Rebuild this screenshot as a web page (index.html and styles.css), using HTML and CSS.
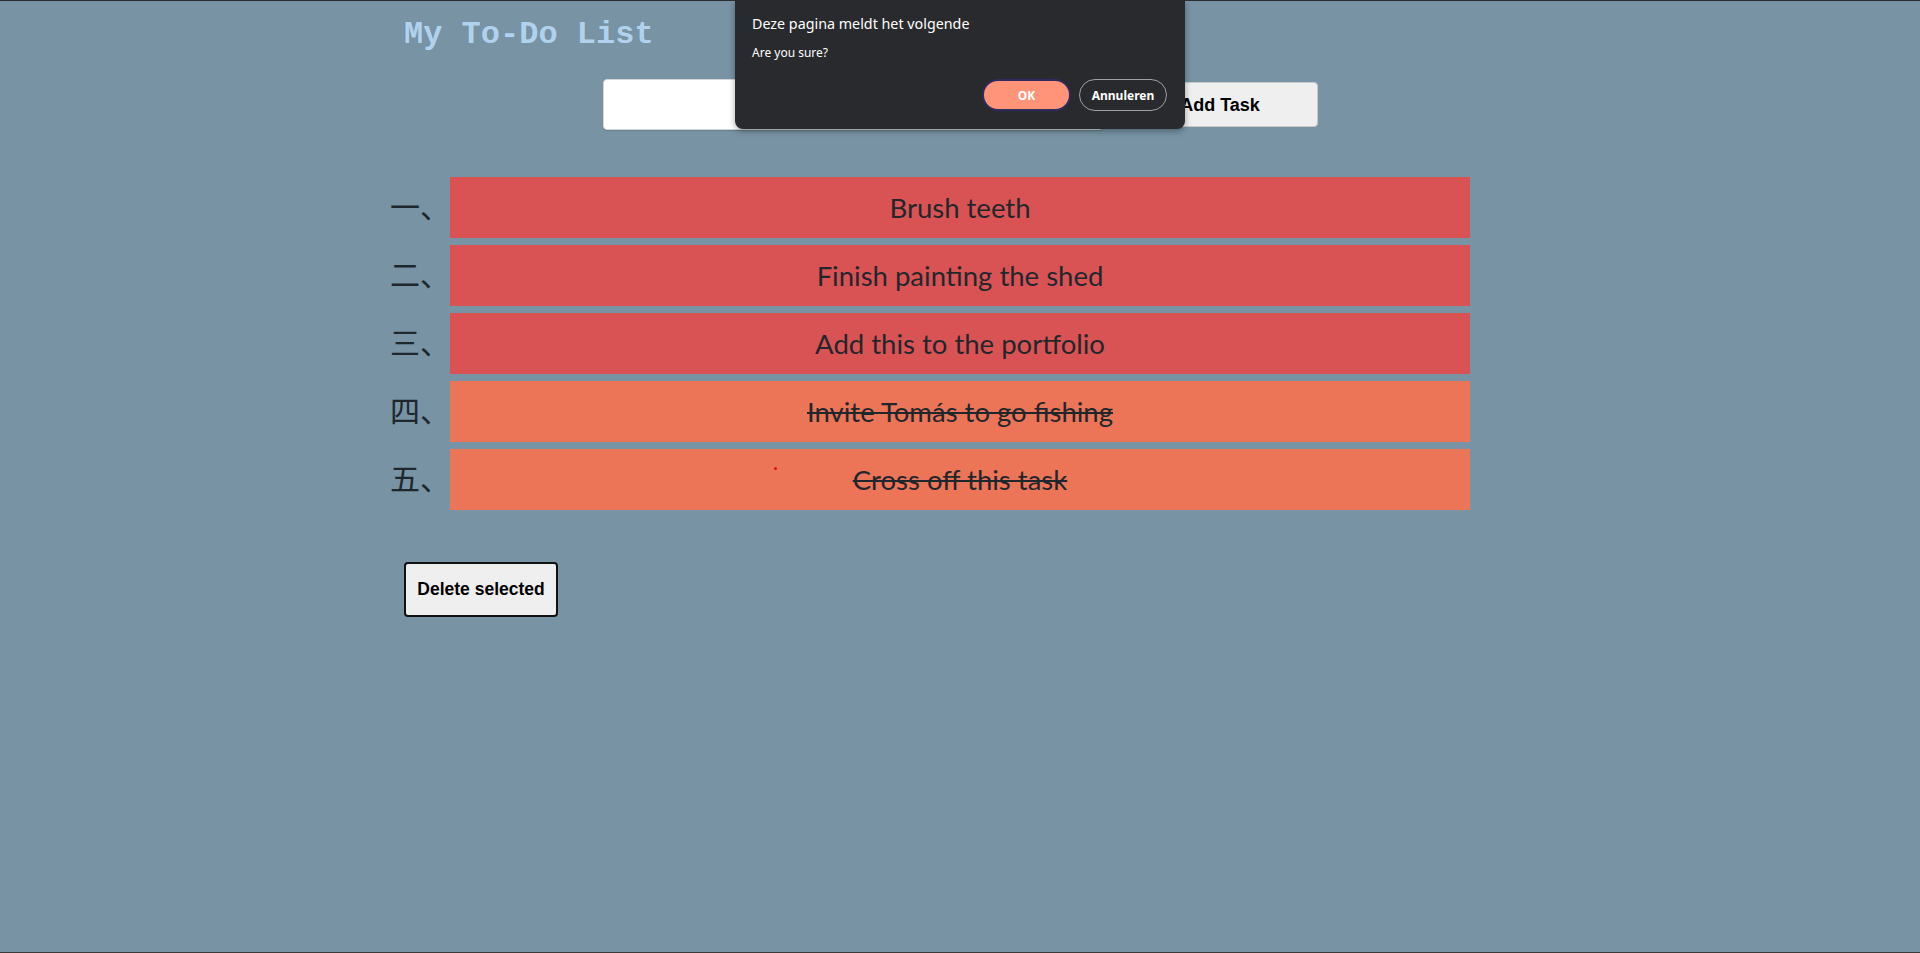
FILE: index.html
```html
<!DOCTYPE html>
<html lang="en">
<head>
<meta charset="utf-8">
<title>My To-Do List</title>
<link rel="stylesheet" href="styles.css">
</head>
<body>
<div class="page">
  <div class="container">
    <h1 class="title">My To-Do List</h1>
    <form class="add-form">
      <input class="task-input" type="text">
      <button class="add-btn" type="button">Add Task</button>
    </form>
    <ol class="tasks">
      <li class="task task-open">Brush teeth</li>
      <li class="task task-open">Finish painting the shed</li>
      <li class="task task-open">Add this to the portfolio</li>
      <li class="task task-done">Invite Tomás to go fishing</li>
      <li class="task task-done">Cross off this task</li>
    </ol>
    <div class="actions">
      <button class="delete-btn" type="button">Delete selected</button>
    </div>
  </div>

  <div class="dialog">
    <div class="dialog-title">Deze pagina meldt het volgende</div>
    <div class="dialog-msg">Are you sure?</div>
    <div class="dialog-buttons">
      <button class="dlg-btn dlg-ok" type="button">OK</button>
      <button class="dlg-btn dlg-cancel" type="button">Annuleren</button>
    </div>
  </div>
  <span class="cursor-dot"></span>
</div>
</body>
</html>
```

FILE: styles.css
```css
html, body {
  margin: 0;
  padding: 0;
}

body {
  background: #7793a4;
  font-family: "Liberation Sans", Arial, sans-serif;
}

.page {
  position: relative;
  height: 953px;
  box-sizing: border-box;
  border-top: 1px solid #2a2b2e;
  border-bottom: 1px solid #3a3a3a;
  overflow: hidden;
}

.container {
  width: 1112px;
  margin: 0 auto;
}

.title {
  margin: 16px 0 0;
  font-family: "Liberation Mono", "Courier New", monospace;
  font-weight: bold;
  font-size: 32px;
  line-height: 36px;
  color: #b0d2ee;
}

.add-form {
  margin: 26px 0 0;
  display: flex;
  justify-content: center;
  align-items: center;
  gap: 20px;
  height: 51px;
}

.task-input {
  width: 500px;
  height: 51px;
  box-sizing: border-box;
  border: 1px solid #d6d6d6;
  border-radius: 4px;
  background: #fff;
  box-shadow: 0 1px 1px rgba(0,0,0,0.15);
  padding: 0 10px;
  font-size: 18px;
}

.add-btn {
  width: 195px;
  height: 45px;
  box-sizing: border-box;
  padding: 2px 0 0;
  border: 1px solid #c9c9c9;
  border-radius: 4px;
  background: #efefef;
  font-family: "Liberation Sans", Arial, sans-serif;
  font-weight: bold;
  font-size: 18px;
  color: #000;
}

.tasks {
  margin: 47px 0 0;
  padding: 0 46px;
  list-style-type: cjk-ideographic;
  list-style-position: outside;
}

.task {
  height: 61px;
  box-sizing: border-box;
  padding-bottom: 4px;
  line-height: 57px;
  margin: 0 0 7px;
  text-align: center;
  font-family: Lato, "Noto Sans CJK SC", sans-serif;
  font-size: 27.5px;
  color: #1f272d;
}

.task::marker {
  font-family: "Noto Sans CJK SC", sans-serif;
  font-size: 30px;
  color: #1f272d;
}

.task-open {
  background: #da5354;
}

.task-done {
  background: #ec7558;
  text-decoration: line-through;
  text-decoration-thickness: 2px;
}

.actions {
  margin-top: 52px;
}

.delete-btn {
  width: 154px;
  height: 55px;
  box-sizing: border-box;
  padding: 0;
  border: 2px solid #111;
  border-radius: 4px;
  background: #efefef;
  font-family: "Liberation Sans", Arial, sans-serif;
  font-weight: bold;
  font-size: 17.5px;
  color: #000;
}

.dialog {
  position: absolute;
  left: 735px;
  top: 0;
  width: 450px;
  height: 128px;
  box-sizing: border-box;
  padding: 13px 18px 0 17px;
  background: #292a2d;
  border-radius: 0 0 8px 8px;
  box-shadow: 0 2px 6px rgba(0,0,0,0.35);
  font-family: "Noto Sans", "Open Sans", sans-serif;
  color: #fff;
}

.dialog-title {
  font-size: 14.3px;
  line-height: 20px;
}

.dialog-msg {
  margin-top: 10px;
  font-size: 12px;
  line-height: 17px;
}

.dialog-buttons {
  margin-top: 18px;
  display: flex;
  justify-content: flex-end;
  gap: 8px;
}

.dlg-btn {
  height: 32px;
  box-sizing: border-box;
  border-radius: 16px;
  font-family: "Noto Sans", "Open Sans", sans-serif;
  font-weight: bold;
  font-size: 12px;
  color: #fff;
}

.dlg-ok {
  width: 89px;
  background: #ff9479;
  border: 2px solid #2e2c5e;
}

.dlg-cancel {
  width: 88px;
  background: transparent;
  border: 1px solid #9aa0a6;
}

.cursor-dot {
  position: absolute;
  left: 774px;
  top: 466px;
  width: 3px;
  height: 3px;
  border-radius: 50%;
  background: #e01010;
}
```
